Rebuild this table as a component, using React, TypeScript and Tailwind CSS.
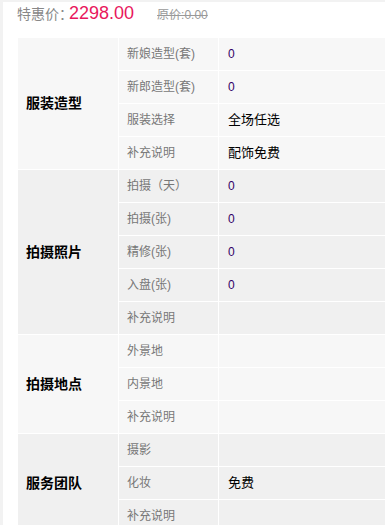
import React from "react";

type Item = { name: string; value?: string; num?: boolean };
type Group = { title: string; light: boolean; items: Item[] };

const groups: Group[] = [
  {
    title: "服装造型",
    light: true,
    items: [
      { name: "新娘造型(套)", value: "0", num: true },
      { name: "新郎造型(套)", value: "0", num: true },
      { name: "服装选择", value: "全场任选" },
      { name: "补充说明", value: "配饰免费" },
    ],
  },
  {
    title: "拍摄照片",
    light: false,
    items: [
      { name: "拍摄（天）", value: "0", num: true },
      { name: "拍摄(张)", value: "0", num: true },
      { name: "精修(张)", value: "0", num: true },
      { name: "入盘(张)", value: "0", num: true },
      { name: "补充说明" },
    ],
  },
  {
    title: "拍摄地点",
    light: true,
    items: [{ name: "外景地" }, { name: "内景地" }, { name: "补充说明" }],
  },
  {
    title: "服务团队",
    light: false,
    items: [{ name: "摄影" }, { name: "化妆", value: "免费" }, { name: "补充说明" }],
  },
];

const spans: Record<number, string> = {
  3: "row-span-3",
  4: "row-span-4",
  5: "row-span-5",
};

const App = () => {
  return (
    <div
      className="w-[385px] h-[525px] overflow-hidden bg-[#f2f2f2] pl-[3px] pt-[2px]"
      style={{ fontFamily: '"Liberation Sans", "Noto Sans CJK SC", sans-serif' }}
    >
      <div className="bg-white h-full w-[420px] pl-[14px]">
        <div className="flex items-baseline h-[36px] pt-[1px]">
          <span className="text-[14px] text-[#888] leading-[20px]">特惠价：</span>
          <span className="-ml-[4px] text-[18px] text-[#e8175d] leading-[20px]">2298.00</span>
          <span className="ml-[23px] text-[12px] text-[#999] line-through leading-[20px]">原价:0.00</span>
        </div>
        <div className="grid grid-cols-[100px_99px_1fr] gap-px bg-white ml-px">
          {groups.map((g) => {
            const bg = g.light ? "bg-[#f7f7f7]" : "bg-[#f0f0f0]";
            return (
              <React.Fragment key={g.title}>
                <div
                  className={`${spans[g.items.length]} ${bg} flex items-center pl-[8px] text-[14px] font-bold text-black`}
                >
                  {g.title}
                </div>
                {g.items.map((it, i) => (
                  <React.Fragment key={i}>
                    <div className={`${bg} h-[32px] flex items-center pl-[8px] text-[12px] text-[#777]`}>
                      {it.name}
                    </div>
                    <div
                      className={`${bg} h-[32px] flex items-center pl-[9px] ${
                        it.num ? "text-[12px] text-[#330066]" : "text-[13px] text-black"
                      }`}
                    >
                      {it.value}
                    </div>
                  </React.Fragment>
                ))}
              </React.Fragment>
            );
          })}
        </div>
      </div>
    </div>
  );
};

export default App;
